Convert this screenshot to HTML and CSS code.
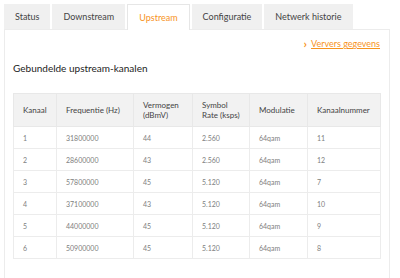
FILE: index.html
```html
<!DOCTYPE html>
<html>
<head>
<meta charset="utf-8">
<link rel="stylesheet" href="styles.css">
</head>
<body>
<div class="tabs">
  <div class="tab">Status</div>
  <div class="tab">Downstream</div>
  <div class="tab active">Upstream</div>
  <div class="tab">Configuratie</div>
  <div class="tab">Netwerk historie</div>
</div>
<div class="panel">
  <div class="refresh"><span class="chev">&#x203A;</span><a href="#">Ververs gegevens</a></div>
  <h2 class="title">Gebundelde upstream-kanalen</h2>
  <table class="grid">
    <colgroup>
      <col style="width:43px"><col style="width:77px"><col style="width:59px"><col style="width:57px"><col style="width:58px"><col style="width:73px">
    </colgroup>
    <thead>
      <tr><th>Kanaal</th><th>Frequentie (Hz)</th><th>Vermogen<br>(dBmV)</th><th>Symbol<br>Rate (ksps)</th><th>Modulatie</th><th>Kanaalnummer</th></tr>
    </thead>
    <tbody>
      <tr><td>1</td><td>31800000</td><td>44</td><td>2.560</td><td>64qam</td><td>11</td></tr>
      <tr><td>2</td><td>28600000</td><td>43</td><td>2.560</td><td>64qam</td><td>12</td></tr>
      <tr><td>3</td><td>57800000</td><td>45</td><td>5.120</td><td>64qam</td><td>7</td></tr>
      <tr><td>4</td><td>37100000</td><td>43</td><td>5.120</td><td>64qam</td><td>10</td></tr>
      <tr><td>5</td><td>44000000</td><td>45</td><td>5.120</td><td>64qam</td><td>9</td></tr>
      <tr><td>6</td><td>50900000</td><td>45</td><td>5.120</td><td>64qam</td><td>8</td></tr>
    </tbody>
  </table>
</div>
</body>
</html>
```
FILE: styles.css
```css
html, body { margin: 0; padding: 0; background: #fff; }
body {
  padding: 4px 10px 0 4px;
  font-family: Lato, "Open Sans", sans-serif;
  color: #333;
}
.tabs {
  display: flex;
  gap: 2px;
  height: 25px;
}
.tab {
  background: #f0f0f0;
  font-size: 9px;
  color: #444;
  padding: 0 11px;
  display: flex;
  align-items: center;
  box-sizing: border-box;
}
.active {
  background: #fff;
  color: #f7931e;
  border: 1px solid #e6e6e6;
  border-bottom: none;
  margin-bottom: -1px;
  position: relative;
  z-index: 1;
}
.panel {
  border: 1px solid #ececec;
  border-bottom: none;
  padding: 8px 8px 20px 8px;
  height: 249px;
  box-sizing: border-box;
}
.refresh {
  display: flex;
  justify-content: flex-end;
  align-items: center;
  gap: 4px;
  font-size: 9px;
  padding-right: 1px;
}
.chev { color: #f7931e; font-size: 12px; font-weight: bold; line-height: 9px; }
.refresh a { color: #f7931e; text-decoration: underline; }
.title {
  font-size: 10px;
  font-weight: normal;
  color: #222;
  margin: 13px 0 19px 0;
}
.grid {
  border-collapse: collapse;
  table-layout: fixed;
  width: 367px;
}
.grid th {
  background: #f2f2f2;
  font-weight: normal;
  font-size: 8px;
  color: #444;
  text-align: left;
  padding: 0 9px;
  height: 32px;
  line-height: 10px;
  border: 1px solid #e8e8e8;
  white-space: nowrap;
}
.grid td {
  font-size: 7px;
  color: #808080;
  padding: 0 9px;
  height: 21px;
  border: 1px solid #ececec;
}
```
